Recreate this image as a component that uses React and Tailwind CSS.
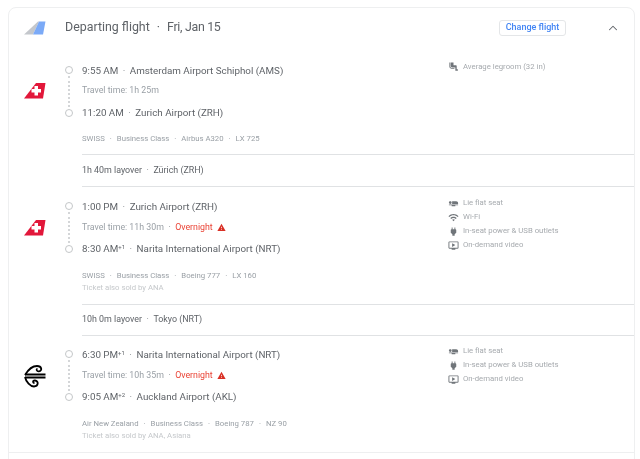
import React from 'react'
import { ChevronUp } from 'lucide-react'

const paths = {
  seat: 'M22 11v2H9V7h9c2.21 0 4 1.79 4 4zM2 14v2h6v2h8v-2h6v-2H2zm5.14-1.9c1.16-1.19 1.14-3.08-.04-4.24-1.19-1.16-3.08-1.14-4.24.04-1.16 1.19-1.14 3.08.04 4.24 1.19 1.16 3.08 1.14 4.24-.04z',
  legroom: 'M5 12V3H3v9c0 2.76 2.24 5 5 5h6v-2H8c-1.66 0-3-1.34-3-3zm15.5 6H19v-7c0-1.1-.9-2-2-2h-5V3H6v8c0 1.65 1.35 3 3 3h7v7h4.5c.83 0 1.5-.67 1.5-1.5s-.67-1.5-1.5-1.5z',
  wifi: 'M1 9l2 2c4.97-4.97 13.03-4.97 18 0l2-2C16.93 2.93 7.08 2.93 1 9zm8 8l3 3 3-3c-1.65-1.66-4.34-1.66-6 0zm-4-4l2 2c2.76-2.76 7.24-2.76 10 0l2-2C15.14 9.14 8.87 9.14 5 13z',
  power: 'M16.01 7L16 3h-2v4h-4V3H8v4h-.01C7 6.99 6 7.99 6 8.99v5.49L9.5 18v3h5v-3l3.5-3.51v-5.5c0-1-1-2-1.99-1.99z',
  video: 'M21 3H3c-1.11 0-2 .89-2 2v12c0 1.1.89 2 2 2h5v2h8v-2h5c1.1 0 1.99-.9 1.99-2L23 5c0-1.11-.9-2-2-2zm0 14H3V5h18v12zm-5-6l-7 4V7z',
  warning: 'M1 21h22L12 2 1 21zm12-3h-2v-2h2v2zm0-4h-2v-4h2v4z'
}

const Glyph = ({ name, className }) => (
  <svg viewBox="0 0 24 24" className={className} fill="currentColor">
    <path d={paths[name]} />
  </svg>
)

const GenericTail = () => (
  <svg width="22" height="14" viewBox="0 0 22 14">
    <polygon points="0,13.5 14,0.5 15,0.5 9,13.5" fill="#c4c7cc" />
    <polygon points="9,13.5 15,0.5 21.5,0.5 19,13.5" fill="#7baaf7" />
  </svg>
)

const SwissTail = () => (
  <svg width="22" height="16" viewBox="0 0 22 16">
    <polygon points="0,15.5 12,0 21.5,0 19,15.5" fill="#e2173a" />
    <polygon points="10.5,3 14,3 14,6 17,6 17,9.5 14,9.5 14,12.5 10.5,12.5 10.5,9.5 7.5,9.5 7.5,6 10.5,6" fill="#fff" />
  </svg>
)

const KoruTail = () => (
  <svg width="22" height="24" viewBox="0 0 22 24" fill="none" stroke="#000" strokeWidth="1.8">
    <path d="M1 10.500H21.500M1 13.500H21.500" />
    <path d="M1 11C4 6 8 2 13 2C18 2 18.500 7 15 7.300C12.500 7.500 12 5 13.500 5" />
    <path d="M1 13C2 18 6.500 22.500 10 22.500C14.500 22.500 15 17 11 16.500C8.500 16.300 8.500 19 10.500 19" />
  </svg>
)

const Dot = () => <span className="mx-[4.500px] text-[#80868b]">·</span>

const Times = ({ time, plus }) => (
  <>
    {time}
    {plus && <sup className="text-[6px] leading-none align-[3px] top-0">+{plus}</sup>}
  </>
)

const segments = [
  {
    logo: <SwissTail />,
    from: { time: '9:55 AM', place: 'Amsterdam Airport Schiphol (AMS)' },
    travel: 'Travel time: 1h 25m',
    to: { time: '11:20 AM', place: 'Zurich Airport (ZRH)' },
    details: ['SWISS', 'Business Class', 'Airbus A320', 'LX 725'],
    amenities: [['legroom', 'Average legroom (32 in)']],
    box: 'h-[107px] pt-[12.5px]',
    layover: '1h 40m layover',
    city: 'Zürich (ZRH)',
    layoverBox: 'h-[33px]'
  },
  {
    logo: <SwissTail />,
    from: { time: '1:00 PM', place: 'Zurich Airport (ZRH)' },
    travel: 'Travel time: 11h 30m',
    overnight: true,
    to: { time: '8:30 AM', plus: 1, place: 'Narita International Airport (NRT)' },
    details: ['SWISS', 'Business Class', 'Boeing 777', 'LX 160'],
    sold: 'Ticket also sold by ANA',
    amenities: [
      ['seat', 'Lie flat seat'],
      ['wifi', 'Wi-Fi'],
      ['power', 'In-seat power & USB outlets'],
      ['video', 'On-demand video']
    ],
    box: 'h-[117px] pt-[9px]',
    layover: '10h 0m layover',
    city: 'Tokyo (NRT)',
    layoverBox: 'h-[32px]'
  },
  {
    logo: <KoruTail />,
    from: { time: '6:30 PM', plus: 1, place: 'Narita International Airport (NRT)' },
    travel: 'Travel time: 10h 35m',
    overnight: true,
    to: { time: '9:05 AM', plus: 2, place: 'Auckland Airport (AKL)' },
    details: ['Air New Zealand', 'Business Class', 'Boeing 787', 'NZ 90'],
    sold: 'Ticket also sold by ANA, Asiana',
    amenities: [
      ['seat', 'Lie flat seat'],
      ['power', 'In-seat power & USB outlets'],
      ['video', 'On-demand video']
    ],
    box: 'h-[116px] pt-[8px]'
  }
]

function Segment({ seg }) {
  return (
    <div className={`flex ${seg.box}`}>
      <div className="w-[56px] pl-[15px] h-[63px] flex items-center shrink-0">{seg.logo}</div>
      <div className="w-[17px] h-[63px] py-[6px] flex flex-col items-center shrink-0 pr-[9px]">
        <span className="w-[8px] h-[8px] rounded-full border border-[#c4c7c9] shrink-0" />
        <span className="flex-1 my-[2px] border-l-2 border-dotted border-[#d4d6d8]" />
        <span className="w-[8px] h-[8px] rounded-full border border-[#c4c7c9] shrink-0" />
      </div>
      <div className="w-[366px] shrink-0">
        <div className="h-[21px] leading-[21px] text-[9.800px] text-[#5f6368] whitespace-nowrap">
          <Times {...seg.from} /><Dot />{seg.from.place}
        </div>
        <div className="h-[21px] flex items-center text-[8.800px] text-[#9aa0a6] whitespace-nowrap">
          {seg.travel}
          {seg.overnight && (
            <>
              <Dot />
              <span className="text-[#ea4335]">Overnight</span>
              <Glyph name="warning" className="w-[9px] h-[9px] ml-[4px] text-[#d93025]" />
            </>
          )}
        </div>
        <div className="h-[21px] leading-[21px] text-[9.800px] text-[#5f6368] whitespace-nowrap">
          <Times {...seg.to} /><Dot />{seg.to.place}
        </div>
        <div className="mt-[10.500px] h-[12px] leading-[12px] text-[7.750px] text-[#9aa0a6] whitespace-nowrap">
          {seg.details.map((d, i) => (
            <React.Fragment key={d}>
              {i > 0 && <span className="mx-[5px]">·</span>}
              {d}
            </React.Fragment>
          ))}
        </div>
        {seg.sold && <div className="h-[12px] leading-[12px] text-[7.750px] text-[#c5c8cb] whitespace-nowrap">{seg.sold}</div>}
      </div>
      <div className="flex-1">
        {seg.amenities.map(([icon, label]) => (
          <div key={label} className="h-[14px] flex items-center gap-[4px] text-[7.750px] text-[#a6aaae] whitespace-nowrap">
            <Glyph name={icon} className="w-[11px] h-[11px] text-[#70757a] shrink-0" />
            {label}
          </div>
        ))}
      </div>
    </div>
  )
}

function Layover({ seg }) {
  return (
    <div className={`ml-[73px] border-y border-[#e0e2e4] flex items-center text-[8.900px] text-[#5f6368] ${seg.layoverBox}`}>
      {seg.layover}<Dot />{seg.city}
    </div>
  )
}

export default function App() {
  return (
    <div className="h-[459px] overflow-hidden bg-white pt-[7px] pl-[8px] pr-[5px] font-['Roboto',sans-serif] blur-[0.45px]">
      <div className="h-[470px] border border-[#eeeff0] rounded-lg">
        <div className="flex items-center h-[39px]">
          <div className="w-[56px] pl-[15px] flex items-center shrink-0"><GenericTail /></div>
          <div className="text-[12.400px] text-[#5f6368] whitespace-nowrap">
            Departing flight<span className="mx-[7px]">·</span><span className="tracking-[-0.3px]">Fri, Jan 15</span>
          </div>
          <button className="ml-auto w-[67px] h-[16px] rounded-[3px] border border-[#e4e6e8] text-[9px] font-medium text-[#4285f4] flex items-center justify-center">
            Change flight
          </button>
          <ChevronUp className="w-[14px] h-[14px] mt-[1px] ml-[40px] mr-[14px] text-[#5f6368]" strokeWidth={1.8} />
        </div>
        {segments.map((seg) => (
          <React.Fragment key={seg.from.place + seg.from.time}>
            <Segment seg={seg} />
            {seg.layover && <Layover seg={seg} />}
          </React.Fragment>
        ))}
        <div className="border-t border-[#eeeff0]" />
      </div>
    </div>
  )
}
